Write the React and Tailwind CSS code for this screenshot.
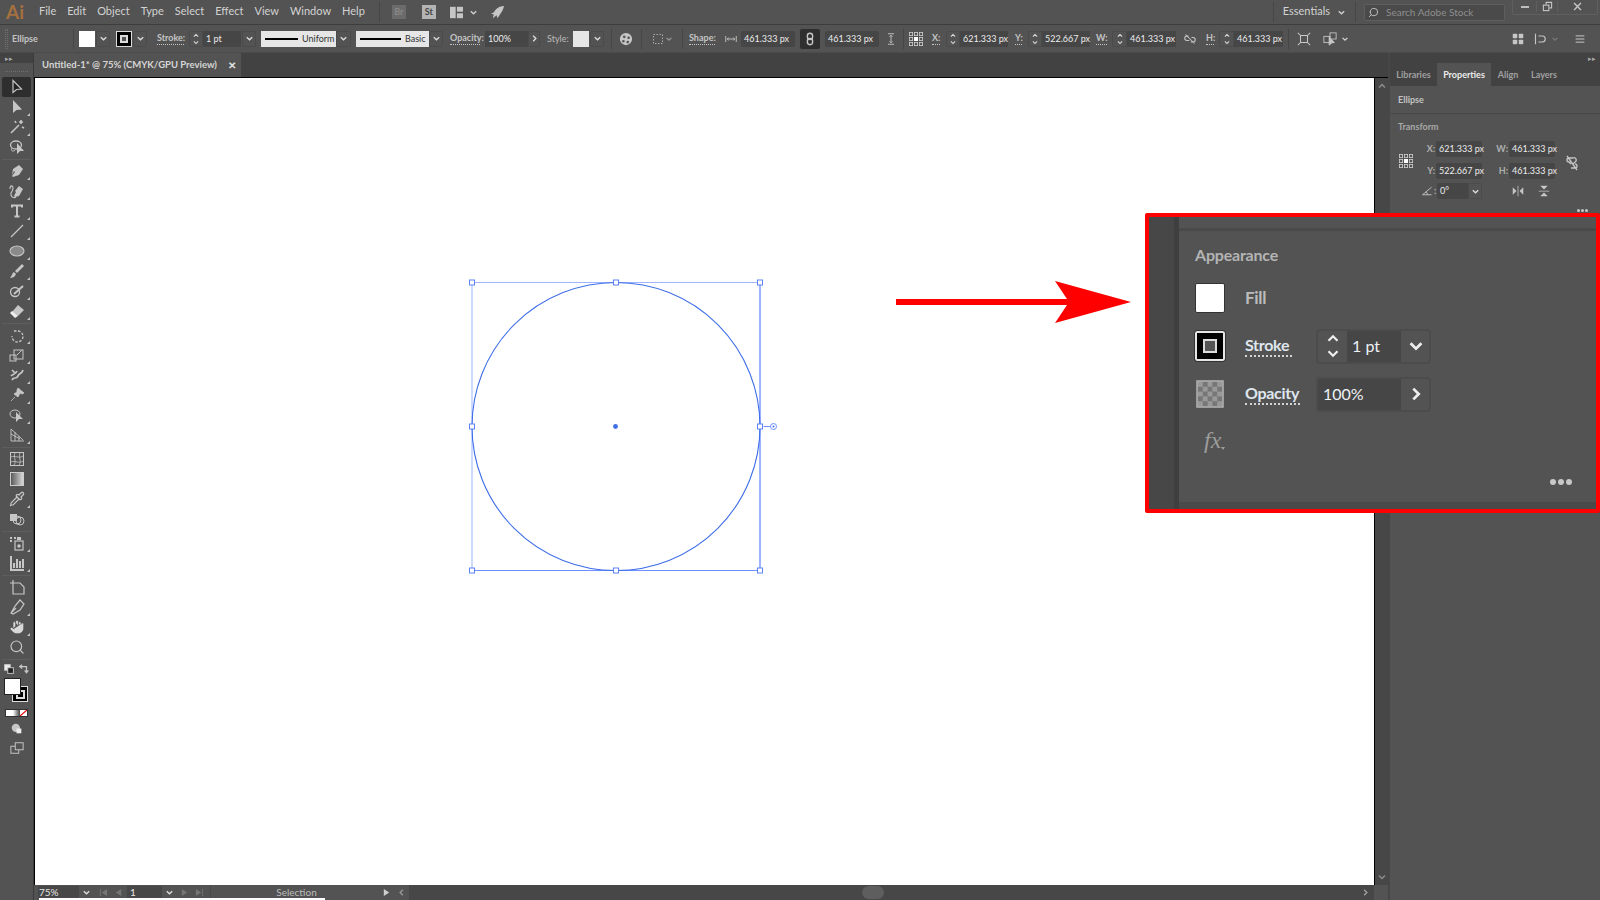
import { Hand, Search, Pipette } from 'lucide-react';

const font = { fontFamily: 'Lato, "Open Sans", sans-serif' };

const Chev = ({ dir = 'down', className = 'w-[9px] h-[9px] text-[#dcdcdc]' }) => {
    const d = {
        down: 'M2 3.5 L5 6.5 L8 3.5',
        up: 'M2 6.5 L5 3.5 L8 6.5',
        right: 'M3.5 2 L6.5 5 L3.5 8',
        left: 'M6.5 2 L3.5 5 L6.5 8',
    }[dir];
    return (
        <svg viewBox="0 0 10 10" className={className} fill="none" stroke="currentColor" strokeWidth="1.5">
            <path d={d} />
        </svg>
    );
};

const Sep = ({ className = '' }) => <div className={`w-px h-[20px] bg-[#464646] shrink-0 ${className}`} />;

const Drop = ({ className = 'w-[14px]', dir = 'down' }) => (
    <div className={`h-[16px] shrink-0 flex items-center justify-center border border-[#4b4b4b] rounded-[2px] ${className}`}>
        <Chev dir={dir} />
    </div>
);

const Spinner = ({ className = 'w-[14px]' }) => (
    <div className={`h-[16px] shrink-0 flex flex-col items-center justify-center border border-[#4b4b4b] rounded-l-[2px] ${className}`}>
        <Chev dir="up" className="w-[8px] h-[7px] text-[#dcdcdc]" />
        <Chev dir="down" className="w-[8px] h-[7px] text-[#dcdcdc]" />
    </div>
);

const Input = ({ children, className = '' }) => (
    <div className={`h-[16px] shrink-0 bg-[#464646] flex items-center px-[3px] text-[9px] text-[#ececec] whitespace-nowrap ${className}`}>
        {children}
    </div>
);

const Label = ({ children, className = '' }) => (
    <div className={`shrink-0 text-[9px] font-bold text-[#c4c4c4] border-b border-dotted border-[#c4c4c4] leading-[12px] whitespace-nowrap ${className}`}>
        {children}
    </div>
);

const Ico = ({ children, className = 'w-[14px] h-[14px]', fill = 'none', sw = 1.2 }) => (
    <svg viewBox="0 0 16 16" className={`shrink-0 text-[#c6c6c6] ${className}`} fill={fill} stroke={fill === 'none' ? 'currentColor' : 'none'} strokeWidth={sw}>
        {children}
    </svg>
);

const RefGrid = ({ className = 'w-[16px] h-[16px]' }) => (
    <svg viewBox="0 0 16 16" className={`shrink-0 text-[#d0d0d0] ${className}`} fill="none" stroke="currentColor" strokeWidth="0.8">
        {[1, 6, 11].map((x) =>
            [1, 6, 11].map((y) =>
                x === 6 && y === 6 ? (
                    <rect key={`${x}${y}`} x={x} y={y} width="4" height="4" fill="#fff" stroke="none" />
                ) : (
                    <rect key={`${x}${y}`} x={x + 0.4} y={y + 0.4} width="3.2" height="3.2" />
                )
            )
        )}
    </svg>
);

const menu = ['File', 'Edit', 'Object', 'Type', 'Select', 'Effect', 'View', 'Window', 'Help'];

function MenuBar() {
    return (
        <div className="h-[25px] shrink-0 flex items-center bg-[#535353] border-b border-[#3d3d3d] text-[11px] text-[#d2d2d2] relative">
            <div className="w-[28px] pl-[6px] text-[19px] font-bold text-[#a5703f] leading-none -translate-y-px">Ai</div>
            <div className="ml-[11px] flex gap-[11px] -translate-y-px">
                {menu.map((m) => (
                    <div key={m}>{m}</div>
                ))}
            </div>
            <Sep className="ml-[14px]" />
            <div className="ml-[12px] w-[14px] h-[14px] bg-[#6b6b6b] text-[9px] font-bold text-[#888] flex items-center justify-center">Br</div>
            <div className="ml-[16px] w-[14px] h-[14px] bg-[#b4b4b4] text-[9px] font-bold text-[#444] flex items-center justify-center">St</div>
            <Ico className="ml-[13px] w-[15px] h-[13px]" fill="currentColor">
                <rect x="0" y="1" width="7" height="14" />
                <rect x="8.5" y="1" width="7.5" height="6" />
                <rect x="8.5" y="9" width="7.5" height="6" />
            </Ico>
            <Chev className="ml-[5px] w-[9px] h-[9px] text-[#cfcfcf]" />
            <Ico className="ml-[12px] w-[15px] h-[15px]" fill="currentColor">
                <path d="M15 1 C10 1 6 4 4 8 L1 9 L4 10 L3 14 L7 11 L8 14 C10 11 14 6 15 1 Z" />
            </Ico>
            <div className="ml-auto flex items-center">
                <Sep />
                <div className="ml-[9px] text-[11px] -translate-y-px">Essentials</div>
                <Chev className="ml-[7px] w-[9px] h-[9px] text-[#cfcfcf]" />
                <Sep className="ml-[9px]" />
                <div className="ml-[8px] w-[141px] h-[17px] bg-[#4a4a4a] border border-[#5e5e5e] rounded-[2px] flex items-center pl-[3px] text-[10px] text-[#8e8e8e]">
                    <Search className="w-[11px] h-[11px] text-[#c4c4c4] -scale-x-100" />
                    <span className="ml-[7px]">Search Adobe Stock</span>
                </div>
                <div className="ml-[7px] mr-[2px] -mt-[10px] h-[15px] w-[86px] flex items-center border-b border-x border-[#5f5f5f] rounded-b-[2px]">
                    <div className="w-[23px] flex justify-center"><div className="w-[8px] h-[2px] bg-[#bdbdbd]" /></div>
                    <div className="w-[22px] flex justify-center border-x border-[#5f5f5f]">
                        <Ico className="w-[11px] h-[11px]" sw={1.6}>
                            <rect x="2" y="6" width="8" height="8" />
                            <path d="M6 5 V2 H14 V10 H11" />
                        </Ico>
                    </div>
                    <div className="flex-1 flex justify-center">
                        <Ico className="w-[11px] h-[11px]" sw={2}><path d="M3 3 L13 13 M13 3 L3 13" /></Ico>
                    </div>
                </div>
            </div>
        </div>
    );
}

function ControlBar() {
    return (
        <div className="h-[28px] shrink-0 flex items-center pl-[5px] bg-[#535353] text-[#d0d0d0] border-b border-[#4b4b4b]">
            <div className="w-[3px] h-[20px] border-x border-dotted border-[#6f6f6f]" />
            <div className="ml-[4px] w-[61px] text-[9px] font-bold text-[#c4c4c4]">Ellipse</div>
            <Sep />
            <div className="ml-[5px] w-[16px] h-[16px] bg-white shrink-0" />
            <Drop className="ml-[1px] w-[14px]" />
            <div className="ml-[6px] w-[16px] h-[16px] bg-black border border-[#dcdcdc] shrink-0 flex items-center justify-center">
                <div className="w-[8px] h-[8px] border-2 border-[#dcdcdc] bg-[#555]" />
            </div>
            <Drop className="ml-[1px] w-[14px]" />
            <Label className="ml-[10px] w-[27px]">Stroke:</Label>
            <Spinner className="ml-[5px] w-[14px]" />
            <Input className="w-[38px]">1 pt</Input>
            <Drop className="ml-[1px] w-[14px]" />
            <div className="ml-[5px] w-[75px] h-[16px] bg-[#e6e6e6] flex items-center pl-[4px] text-[9px] text-[#333] shrink-0">
                <div className="w-[33px] h-[2px] bg-black" />
                <span className="ml-[4px]">Uniform</span>
            </div>
            <Drop className="w-[15px]" />
            <div className="ml-[5px] w-[73px] h-[16px] bg-[#e6e6e6] flex items-center pl-[4px] text-[9px] text-[#333] shrink-0">
                <div className="w-[41px] h-[2px] bg-black" />
                <span className="ml-[4px]">Basic</span>
            </div>
            <Drop className="w-[14px]" />
            <Label className="ml-[7px] w-[30px]">Opacity:</Label>
            <Input className="ml-[5px] w-[43px]">100%</Input>
            <Drop className="w-[12px]" dir="right" />
            <div className="ml-[7px] w-[21px] text-[9px] text-[#bcbcbc] shrink-0">Style:</div>
            <div className="ml-[5px] w-[16px] h-[16px] bg-[#e6e6e6] shrink-0" />
            <Drop className="ml-[1px] w-[14px]" />
            <Sep className="ml-[7px]" />
            <Ico className="ml-[7px] w-[14px] h-[14px]" fill="currentColor">
                <path fillRule="evenodd" d="M8 1 A7 7 0 1 1 8 15 A7 7 0 1 1 8 1 Z M6 4 A1.5 1.5 0 1 0 6 7 A1.5 1.5 0 1 0 6 4 Z M11 5 A1.5 1.5 0 1 0 11 8 A1.5 1.5 0 1 0 11 5 Z M5 9 A1.5 1.5 0 1 0 5 12 A1.5 1.5 0 1 0 5 9 Z M10 10 A1.5 1.5 0 1 0 10 13 A1.5 1.5 0 1 0 10 10 Z" />
            </Ico>
            <Sep className="ml-[8px]" />
            <Ico className="ml-[10px] w-[12px] h-[12px]" sw={1}>
                <rect x="2" y="2" width="12" height="12" strokeDasharray="2 2" />
            </Ico>
            <Chev className="ml-[1px] w-[8px] h-[8px] text-[#9a9a9a]" />
            <Sep className="ml-[9px]" />
            <Label className="ml-[6px] w-[26px]">Shape:</Label>
            <Ico className="ml-[10px] w-[12px] h-[12px]" sw={1.2}>
                <path d="M1 4 V12 M15 4 V12 M3 8 H13 M5 6 L3 8 L5 10 M11 6 L13 8 L11 10" />
            </Ico>
            <Input className="ml-[4px] w-[54px] rounded-[2px]">461.333 px</Input>
            <div className="ml-[5px] w-[20px] h-[20px] bg-[#2f2f2f] rounded-[2px] flex items-center justify-center shrink-0">
                <Ico className="w-[14px] h-[14px]" sw={1.6}>
                    <rect x="5" y="1.5" width="6" height="7" rx="3" />
                    <rect x="5" y="7.5" width="6" height="7" rx="3" />
                </Ico>
            </div>
            <Input className="ml-[5px] w-[54px] rounded-[2px]">461.333 px</Input>
            <Ico className="ml-[6px] w-[12px] h-[12px]" sw={1.2}>
                <path d="M4 1 H12 M4 15 H12 M8 3 V13 M6 5 L8 3 L10 5 M6 11 L8 13 L10 11" />
            </Ico>
            <Sep className="ml-[6px]" />
            <RefGrid className="ml-[4px] w-[16px] h-[16px]" />
            <Label className="ml-[8px] w-[8px]">X:</Label>
            <Spinner className="ml-[6px] w-[14px]" />
            <Input className="w-[48px]">621.333 px</Input>
            <Label className="ml-[7px] w-[7px]">Y:</Label>
            <Spinner className="ml-[6px] w-[14px]" />
            <Input className="w-[48px]">522.667 px</Input>
            <Label className="ml-[6px] w-[11px]">W:</Label>
            <Spinner className="ml-[5px] w-[15px]" />
            <Input className="w-[49px]">461.333 px</Input>
            <Ico className="ml-[8px] w-[12px] h-[12px]" sw={1.4}>
                <path d="M6 4 H4 A3 3 0 0 0 4 10 H7 M10 6 H12 A3 3 0 0 1 12 12 H9 M2 2 L14 14" />
            </Ico>
            <Label className="ml-[10px] w-[8px]">H:</Label>
            <Spinner className="ml-[5px] w-[15px]" />
            <Input className="w-[49px]">461.333 px</Input>
            <Sep className="ml-[5px]" />
            <Ico className="ml-[8px] w-[14px] h-[14px]" sw={1.2}>
                <rect x="4" y="4" width="8" height="8" />
                <path d="M1 1 L4 4 M15 1 L12 4 M1 15 L4 12 M15 15 L12 12" />
            </Ico>
            <Ico className="ml-[12px] w-[14px] h-[14px]" sw={1}>
                <rect x="1" y="5" width="7" height="7" />
                <rect x="8" y="1" width="7" height="7" />
                <path d="M7 6 L7 15 L10 12.5 L13 12 Z" fill="currentColor" />
            </Ico>
            <Chev className="ml-[4px] w-[8px] h-[8px] text-[#d8d8d8]" />
            <Ico className="ml-auto w-[12px] h-[12px]" fill="currentColor">
                <rect x="1" y="1" width="6" height="6" rx="1" />
                <rect x="9" y="1" width="6" height="6" rx="1" />
                <rect x="1" y="9" width="6" height="6" rx="1" />
                <rect x="9" y="9" width="6" height="6" rx="1" />
            </Ico>
            <Ico className="ml-[10px] w-[12px] h-[12px]" sw={1.5}>
                <path d="M2 1 V15 M6 4 H11 A3 3 0 0 1 11 12 H6" />
            </Ico>
            <Chev className="ml-[5px] w-[8px] h-[8px] text-[#7b7b7b]" />
            <Ico className="ml-[16px] mr-[15px] w-[10px] h-[10px]" sw={1.6}>
                <path d="M1 3 H15 M1 8 H15 M1 13 H15" />
            </Ico>
        </div>
    );
}

const tools = [
    { g: [
        { a: true, i: <path d="M4 1.5 V13.5 L7.5 10.5 L12.5 10 Z" stroke="currentColor" strokeWidth="1.2" fill="#222" /> },
        { t: 1, i: <path d="M4 1 V14 L7.5 11 L13 10.5 Z" fill="currentColor" /> },
        { t: 1, i: <path d="M2 14 L10 6 M12 1 V5 M10 3 H14 M6 2 L7 4 M13 8 L15 9" stroke="currentColor" strokeWidth="1.6" fill="none" /> },
        { i: <><ellipse cx="7" cy="6" rx="5.5" ry="4" stroke="currentColor" strokeWidth="1.3" fill="none" /><path d="M3 9 C1 12 5 13 6 11" stroke="currentColor" fill="none" /><path d="M8 4 V15 L11 12 L15 12 Z" fill="currentColor" /></> },
    ] },
    { g: [
        { t: 1, i: <path d="M10 2 L14 6 L10 12 L4 14 L3 13 L6 9 L5 8 L3 12 L4 6 Z" fill="currentColor" /> },
        { t: 1, i: <><path d="M10 3 L14 6 L10 13 L6 14 L5 13 L7 9 L6 8 Z" fill="currentColor" /><path d="M1 6 C1 2 4 2 4 5 C4 9 1 9 2 12 C3 15 6 15 7 14" stroke="currentColor" strokeWidth="1.1" fill="none" /></> },
        { t: 1, i: <path d="M3 4.5 V2.5 H13 V4.5 M8 2.5 V13.5 M5.5 13.5 H10.5" stroke="currentColor" strokeWidth="2" fill="none" /> },
        { t: 1, i: <path d="M2 14 L14 2" stroke="currentColor" strokeWidth="1.3" fill="none" /> },
        { t: 1, i: <ellipse cx="8" cy="8" rx="7" ry="5" fill="#8a8a8a" stroke="currentColor" strokeWidth="1.1" /> },
        { t: 1, i: <path d="M13 1 L15 3 L8 10 L6 8 Z M5 9 L7 11 C6 14 3 15 1 15 C3 13 3 10 5 9 Z" fill="currentColor" /> },
        { t: 1, i: <><circle cx="6" cy="9" r="4.5" stroke="currentColor" strokeWidth="1.3" fill="none" /><path d="M5 11 L14 3" stroke="currentColor" strokeWidth="2" fill="none" /></> },
        { t: 1, i: <><path d="M9 2 L15 7 L9 13 L3 9 Z" fill="currentColor" /><path d="M1 10 L6 15 L9 13 L3 8 Z" fill="#eee" /></> },
    ] },
    { g: [
        { t: 1, i: <path d="M5 4 H8 A5.5 5.5 0 1 1 3 9" stroke="currentColor" strokeWidth="1.3" fill="none" strokeDasharray="2.5 1.5" /> },
        { t: 1, i: <><rect x="1" y="8" width="6" height="6" stroke="currentColor" fill="none" /><rect x="5" y="3" width="9" height="9" stroke="currentColor" fill="none" /><path d="M8 8 L13 3" stroke="currentColor" fill="none" /></> },
        { t: 1, i: <path d="M3 13 C5 9 7 13 9 9 C10 6 13 7 14 3 M3 3 L6 6 M2 9 C4 7 7 7 8 4" stroke="currentColor" strokeWidth="1.7" fill="none" /> },
        { t: 1, i: <path d="M9 1 L15 6 L13 7 L11 6 L9 10 L5 7 L8 5 L8 3 Z M6 10 L2 14" fill="currentColor" stroke="currentColor" strokeWidth="0.8" /> },
        { t: 1, i: <><ellipse cx="6" cy="7" rx="5" ry="4" stroke="currentColor" fill="none" /><path d="M7 5 V15 L10 12 L14 12 Z" fill="currentColor" /></> },
        { t: 1, i: <path d="M2 2 V14 H15 M2 2 L14 13 M6 5 V14 M10 9 V14 M2 7 L11 12" stroke="currentColor" strokeWidth="0.9" fill="none" /> },
    ] },
    { g: [
        { i: <><rect x="1.5" y="1.5" width="13" height="13" stroke="currentColor" fill="none" /><path d="M2 6 C6 4 10 8 14 5 M2 11 C6 9 10 13 14 10 M6 2 C4 6 8 10 5 14 M11 2 C9 6 13 10 10 14" stroke="currentColor" strokeWidth="0.8" fill="none" /></> },
        { i: <><defs><linearGradient id="gr" x1="0" x2="1"><stop offset="0" stopColor="#555" /><stop offset="1" stopColor="#ddd" /></linearGradient></defs><rect x="1.5" y="1.5" width="13" height="13" fill="url(#gr)" stroke="#ccc" /></> },
        { t: 1, c: <Pipette className="w-[16px] h-[16px] text-[#c6c6c6]" strokeWidth={1.8} /> },
        { i: <><rect x="1" y="3" width="7" height="7" fill="currentColor" /><circle cx="8" cy="9" r="4" stroke="currentColor" fill="none" /><circle cx="11" cy="10" r="4" stroke="currentColor" fill="none" /></> },
    ] },
    { g: [
        { t: 1, i: <><path d="M1 3 H3 M5 3 H7 M1 6 H3" stroke="currentColor" strokeWidth="2" fill="none" /><rect x="6" y="6" width="8" height="9" stroke="currentColor" strokeWidth="1.2" fill="none" /><circle cx="10" cy="11" r="1.8" fill="currentColor" /><rect x="8" y="2" width="4" height="3" fill="currentColor" /></> },
        { t: 1, i: <path d="M2 1 V15 H15 M5 13 V8 M8 13 V4 M11 13 V6 M14 13 V4" stroke="currentColor" strokeWidth="2" fill="none" /> },
    ] },
    { g: [
        { i: <path d="M4 1 V5 M1 4 H11 L15 8 V15 H4 V4" stroke="currentColor" strokeWidth="1.2" fill="none" /> },
        { t: 1, i: <path d="M11 1 L15 5 L11 11 L4 15 L2 14 L6 7 Z M2 14 L7 9" stroke="currentColor" strokeWidth="1.2" fill="none" /> },
        { t: 1, c: <Hand className="w-[16px] h-[16px] text-[#d8d8d8]" fill="currentColor" stroke="#535353" strokeWidth={1} /> },
        { c: <Search className="w-[16px] h-[16px] text-[#c6c6c6]" strokeWidth={1.8} /> },
    ] },
];

function ToolBar() {
    return (
        <div className="w-[34px] shrink-0 flex flex-col bg-[#535353] border-r border-[#3b3b3b] relative">
            <div className="h-[10px] bg-[#424242] text-[#aaa] text-[7px] leading-[10px] pl-[5px]">▸▸</div>
            <div className="h-[8px] mx-[5px] mt-[1px] border-b border-dotted border-[#6f6f6f]" />
            <div className="flex flex-col items-center mt-[5px]">
                {tools.map((group, gi) => (
                    <div key={gi} className="w-[29px] flex flex-col border-b border-[#5e5e5e] pb-[2px] mb-[1px]">
                        {group.g.map((tool, i) => (
                            <div key={i} className={`relative h-[20px] flex items-center justify-center rounded-[2px] ${tool.a ? 'bg-[#2e2e2e]' : ''}`}>
                                {tool.c || <svg viewBox="0 0 16 16" className="w-[16px] h-[16px] text-[#c6c6c6]">{tool.i}</svg>}
                                {tool.t && <div className="absolute right-[1px] bottom-[1px] w-0 h-0 border-l-[3px] border-l-transparent border-b-[3px] border-b-[#c4c4c4]" />}
                            </div>
                        ))}
                    </div>
                ))}
            </div>
            <div className="flex items-center justify-between px-[4px] mt-[3px]">
                <Ico className="w-[10px] h-[10px]" sw={1.5}>
                    <rect x="1" y="1" width="9" height="9" fill="#eee" />
                    <rect x="6" y="6" width="9" height="9" fill="#222" />
                </Ico>
                <Ico className="w-[10px] h-[10px]" sw={2}><path d="M2 4 H12 V13 M9 10 L12 14 L15 10 M5 1 L1 4 L5 7" /></Ico>
            </div>
            <div className="relative h-[26px] mt-[3px]">
                <div className="absolute left-[12px] top-[9px] w-[16px] h-[16px] bg-black border border-[#ddd] flex items-center justify-center">
                    <div className="w-[9px] h-[9px] border-2 border-[#ddd]" />
                </div>
                <div className="absolute left-[4px] top-[1px] w-[17px] h-[17px] bg-white border border-[#222]" />
            </div>
            <div className="flex items-center h-[8px] mx-[5px] mt-[6px] border border-[#333]">
                <div className="w-[7px] h-full bg-white" />
                <div className="w-[7px] h-full bg-gradient-to-r from-white to-[#444]" />
                <div className="flex-1 h-full bg-white relative">
                    <svg viewBox="0 0 10 8" preserveAspectRatio="none" className="w-full h-full"><path d="M0 8 L10 0" stroke="#e60000" strokeWidth="1.6" /></svg>
                </div>
            </div>
            <div className="flex justify-center mt-[6px]">
                <Ico className="w-[11px] h-[11px]" fill="currentColor">
                    <circle cx="7" cy="7" r="6" />
                    <rect x="8" y="8" width="7" height="7" fill="#eee" />
                </Ico>
            </div>
            <div className="flex justify-center mt-[7px]">
                <Ico className="w-[16px] h-[14px]" sw={1.1}>
                    <rect x="1" y="6" width="9" height="8" />
                    <rect x="6" y="2" width="9" height="8" fill="#535353" />
                </Ico>
            </div>
        </div>
    );
}

function Artboard() {
    const hx = [472, 616, 760];
    const hy = [282, 426, 570];
    return (
        <svg viewBox="36 78 1338 807" className="absolute inset-0 w-full h-full">
            <rect x="472.5" y="282.5" width="288" height="288" fill="none" stroke="#9fb6ff" />
            <path d="M760.5 282.5 V570.5 H472.5" fill="none" stroke="#6d8fff" />
            <circle cx="616.5" cy="426.5" r="144" fill="none" stroke="#3f6ee8" strokeWidth="1.1" />
            <circle cx="616" cy="426.5" r="2.4" fill="#3f6ee8" />
            <path d="M764 426.5 H771" stroke="#6d8fff" />
            <circle cx="774" cy="426.5" r="3" fill="none" stroke="#6d8fff" />
            <circle cx="774" cy="426.5" r="1" fill="#3f6ee8" />
            {hx.map((x) =>
                hy.map((y) =>
                    x === 616 && y === 426 ? null : (
                        <rect key={`${x}-${y}`} x={x - 2} y={y - 2} width="5" height="5" fill="#fff" stroke="#5c82f5" />
                    )
                )
            )}
        </svg>
    );
}

function StatusBar() {
    return (
        <div className="h-[15px] shrink-0 flex items-center bg-[#535353] text-[10px] text-[#d4d4d4] relative">
            <div className="ml-[4px] w-[41px] h-[13px] bg-[#474747] flex items-center pl-[1px] text-[#e6e6e6]">75%</div>
            <div className="w-[14px] flex justify-center"><Chev /></div>
            <div className="ml-[6px] flex items-center gap-[6px] text-[#757575] w-[28px]">
                <svg viewBox="0 0 10 10" className="w-[9px] h-[9px]" fill="currentColor"><path d="M1 1 H2 V9 H1 Z M9 1 V9 L3 5 Z" /></svg>
                <svg viewBox="0 0 10 10" className="w-[9px] h-[9px]" fill="currentColor"><path d="M8 1 V9 L2 5 Z" /></svg>
            </div>
            <div className="w-[35px] h-[13px] bg-[#474747] flex items-center pl-[3px] text-[#e6e6e6]">1</div>
            <div className="w-[14px] flex justify-center"><Chev /></div>
            <div className="ml-[4px] flex items-center gap-[6px] text-[#757575] w-[30px]">
                <svg viewBox="0 0 10 10" className="w-[9px] h-[9px]" fill="currentColor"><path d="M2 1 V9 L8 5 Z" /></svg>
                <svg viewBox="0 0 10 10" className="w-[9px] h-[9px]" fill="currentColor"><path d="M9 1 H8 V9 H9 Z M1 1 V9 L7 5 Z" /></svg>
            </div>
            <div className="w-[172px] text-center text-[#bdbdbd] border-l border-[#4a4a4a]">Selection</div>
            <svg viewBox="0 0 10 10" className="w-[9px] h-[9px] text-[#d0d0d0]" fill="currentColor"><path d="M2 1 V9 L8 5 Z" /></svg>
            <Chev dir="left" className="ml-[6px] w-[9px] h-[9px] text-[#9a9a9a]" />
            <div className="flex-1 h-full bg-[#474747] ml-[3px] flex items-center">
                <div className="ml-[453px] w-[22px] h-[13px] rounded-full bg-[#5e5e5e]" />
                <Chev dir="right" className="ml-auto mr-[4px] w-[9px] h-[9px] text-[#a0a0a0]" />
            </div>
            <div className="w-[14px] h-full bg-[#535353] shrink-0" />
            <div className="absolute left-[5px] bottom-0 w-[286px] h-[2px] bg-white" />
        </div>
    );
}

function Panel() {
    return (
        <div className="w-[212px] shrink-0 flex flex-col bg-[#535353] border-l-2 border-[#474747]">
            <div className="h-[10px] bg-[#424242] text-[#aaa] text-[7px] leading-[10px] text-right pr-[4px]">▸▸</div>
            <div className="h-[23px] bg-[#424242] flex text-[9px] font-bold text-[#a0a0a0]">
                <div className="w-[47px] flex items-center justify-center">Libraries</div>
                <div className="w-[54px] flex items-center justify-center bg-[#535353] text-[#ececec]">Properties</div>
                <div className="w-[34px] flex items-center justify-center">Align</div>
                <div className="w-[38px] flex items-center justify-center">Layers</div>
            </div>
            <div className="h-[28px] flex items-center pl-[8px] text-[9px] font-bold text-[#c4c4c4] border-b border-[#484848]">Ellipse</div>
            <div className="px-[8px] pt-[7px] relative">
                <div className="text-[9px] font-bold text-[#a8a8a8] leading-[12px]">Transform</div>
                <div className="mt-[8px] flex">
                    <RefGrid className="mt-[12px] w-[16px] h-[16px]" />
                    <div className="ml-[6px] grid grid-cols-[16px_46px_27px_46px] gap-y-[6px] items-center text-[9px] font-bold text-[#b0b0b0]">
                        <div className="text-right pr-[1px]">X:</div>
                        <Input className="rounded-[2px] font-normal">621.333 px</Input>
                        <div className="text-right pr-[1px]">W:</div>
                        <Input className="rounded-[2px] font-normal">461.333 px</Input>
                        <div className="text-right pr-[1px]">Y:</div>
                        <Input className="rounded-[2px] font-normal">522.667 px</Input>
                        <div className="text-right pr-[1px]">H:</div>
                        <Input className="rounded-[2px] font-normal">461.333 px</Input>
                    </div>
                    <Ico className="ml-[9px] mt-[12px] w-[16px] h-[20px]" sw={1.3}>
                        <path d="M5 3 H9 A2 2 0 0 1 11 7 L9 9 M7 13 H11 M5 3 A2 2 0 0 0 5 7 L7 9 M11 13 A2 2 0 0 0 11 9 M3 1 L13 15" />
                    </Ico>
                </div>
                <div className="mt-[4px] flex items-center pl-[23px]">
                    <Ico className="w-[12px] h-[12px]" sw={1.2}><path d="M14 3 L2 13 H14 M7 9 L9 13" /></Ico>
                    <span className="ml-[1px] text-[9px] font-bold text-[#b0b0b0] w-[3px]">:</span>
                    <Input className="w-[31px] rounded-l-[2px]">0°</Input>
                    <Drop className="w-[14px]" />
                    <Ico className="ml-[30px] w-[12px] h-[12px]" fill="currentColor">
                        <path d="M1 3 L6 8 L1 13 Z M15 3 L10 8 L15 13 Z M7.5 1 H8.5 V15 H7.5 Z" />
                    </Ico>
                    <Ico className="ml-[14px] w-[12px] h-[12px]" fill="currentColor">
                        <path d="M3 1 H13 L8 6 Z M3 15 H13 L8 10 Z M1 7.5 H15 V8.5 H1 Z" />
                    </Ico>
                </div>
                <div className="mt-[10px] mr-[4px] flex justify-end gap-[1px]">
                    <div className="w-[3px] h-[3px] rounded-full bg-[#c8c8c8]" />
                    <div className="w-[3px] h-[3px] rounded-full bg-[#c8c8c8]" />
                    <div className="w-[3px] h-[3px] rounded-full bg-[#c8c8c8]" />
                </div>
            </div>
        </div>
    );
}

function Callout() {
    return (
        <div className="absolute left-[1145px] top-[213px] w-[455px] h-[300px] border-4 border-[#fe0000] rounded-[2px] bg-[#535353] flex overflow-hidden">
            <div className="w-[25px] bg-[#474747] shrink-0" />
            <div className="w-[5px] bg-[#3f3f3f] shrink-0" />
            <div className="flex-1 flex flex-col relative">
                <div className="h-[3px] mt-[11px] bg-[#4a4a4a]" />
                <div className="pl-[16px] flex-1 flex flex-col">
                    <div className="mt-[14px] text-[16px] leading-[20px] text-[#b4b4b4] font-bold tracking-[-0.2px]">Appearance</div>
                    <div className="mt-[18px] flex items-center h-[30px]">
                        <div className="w-[30px] h-[30px] bg-white border border-[#333] rounded-[2px]" />
                        <div className="ml-[20px] text-[17px] font-bold text-[#bcbcbc] tracking-[-0.3px]">Fill</div>
                    </div>
                    <div className="mt-[18px] flex items-center h-[30px]">
                        <div className="w-[30px] h-[30px] bg-black border-2 border-[#e6e6e6] outline outline-[#333] rounded-[2px] flex items-center justify-center">
                            <div className="w-[14px] h-[14px] border-2 border-[#dcdcdc] bg-[#555]" />
                        </div>
                        <div className="ml-[20px] w-[47px] text-[16px] leading-[20px] font-bold text-[#dfe6ee] border-b-2 border-dotted border-[#d4d4d4] tracking-[-0.3px]">Stroke</div>
                        <div className="ml-[24px] h-[35px] flex items-stretch border-2 border-[#4c4c4c] rounded-[4px]">
                            <div className="w-[29px] flex flex-col items-center justify-center">
                                <Chev dir="up" className="w-[18px] h-[15px] text-[#eee]" />
                                <Chev dir="down" className="w-[18px] h-[15px] text-[#eee]" />
                            </div>
                            <div className="w-[54px] bg-[#464646] flex items-center pl-[5px] text-[16px] text-[#eef2f6]">1 pt</div>
                            <div className="ml-[2px] w-[26px] flex items-center justify-center"><Chev className="w-[18px] h-[18px] text-[#eee]" /></div>
                        </div>
                    </div>
                    <div className="mt-[18px] flex items-center h-[30px]">
                        <svg viewBox="0 0 28 28" className="w-[28px] h-[28px] mx-[1px] text-[#9a9a9a]">
                            <rect x="1" y="1" width="26" height="26" fill="#777" stroke="#b5b5b5" strokeWidth="1.5" />
                            {[0, 1, 2, 3, 4].map((a) => [0, 1, 2, 3, 4].map((b) => (a + b) % 2 === 0 && (
                                <rect key={`${a}${b}`} x={2 + a * 4.8} y={2 + b * 4.8} width="4.8" height="4.8" fill="#999" />
                            )))}
                        </svg>
                        <div className="ml-[20px] w-[55px] text-[16px] leading-[20px] font-bold text-[#dfe6ee] border-b-2 border-dotted border-[#d4d4d4] tracking-[-0.3px]">Opacity</div>
                        <div className="ml-[16px] h-[35px] flex items-stretch border-2 border-[#4c4c4c] rounded-[4px]">
                            <div className="w-[83px] bg-[#464646] flex items-center pl-[5px] text-[16px] text-[#eef2f6]">100%</div>
                            <div className="ml-[2px] w-[26px] flex items-center justify-center"><Chev dir="right" className="w-[18px] h-[18px] text-[#eee]" /></div>
                        </div>
                    </div>
                    <div className="mt-[15px] ml-[9px] flex items-end h-[28px] text-[#9c9c9c]" >
                        <span className="text-[24px] leading-[24px] italic" style={{ fontFamily: '"Liberation Serif", serif' }}>fx</span>
                        <span className="w-0 h-0 mb-[2px] border-x-[2px] border-x-transparent border-t-[3px] border-t-[#9c9c9c]" />
                    </div>
                </div>
                <div className="absolute right-[24px] bottom-[24px] flex gap-[2px]">
                    <div className="w-[6px] h-[6px] rounded-full bg-[#c8c8c8]" />
                    <div className="w-[6px] h-[6px] rounded-full bg-[#c8c8c8]" />
                    <div className="w-[6px] h-[6px] rounded-full bg-[#c8c8c8]" />
                </div>
                <div className="h-[7px] bg-[#4a4a4a]" />
            </div>
        </div>
    );
}

export default function App() {
    return (
        <div className="relative w-[1600px] h-[900px] flex flex-col bg-[#535353] overflow-hidden" style={font}>
            <MenuBar />
            <ControlBar />
            <div className="flex-1 flex min-h-0">
                <ToolBar />
                <div className="flex-1 min-w-0 flex flex-col">
                    <div className="h-[25px] shrink-0 bg-[#424242] border-b border-black flex">
                        <div className="w-[207px] bg-[#535353] flex items-center pl-[8px] text-[9.5px] font-bold text-[#d6d6d6] whitespace-nowrap">
                            <span>Untitled-1* @ 75% (CMYK/GPU Preview)</span>
                            <span className="ml-auto mr-[5px] text-[10px] text-[#e2e2e2]">✕</span>
                        </div>
                    </div>
                    <div className="flex-1 flex min-h-0">
                        <div className="flex-1 relative bg-white border-l border-black overflow-hidden">
                            <Artboard />
                        </div>
                        <div className="w-[14px] shrink-0 bg-[#474747] border-l border-black flex flex-col items-center justify-between py-[3px]">
                            <Chev dir="up" className="w-[10px] h-[10px] text-[#8c8c8c]" />
                            <Chev dir="down" className="w-[10px] h-[10px] text-[#8c8c8c]" />
                        </div>
                    </div>
                    <StatusBar />
                </div>
                <Panel />
            </div>
            {/* red arrow pointing at the magnified panel */}
            <svg viewBox="0 0 240 50" className="absolute left-[895px] top-[279px] w-[240px] h-[50px]">
                <path d="M1 20 H172 L160 2 L236 23 L160 44 L172 26 H1 Z" fill="#fe0000" />
            </svg>
            <Callout />
        </div>
    );
}
